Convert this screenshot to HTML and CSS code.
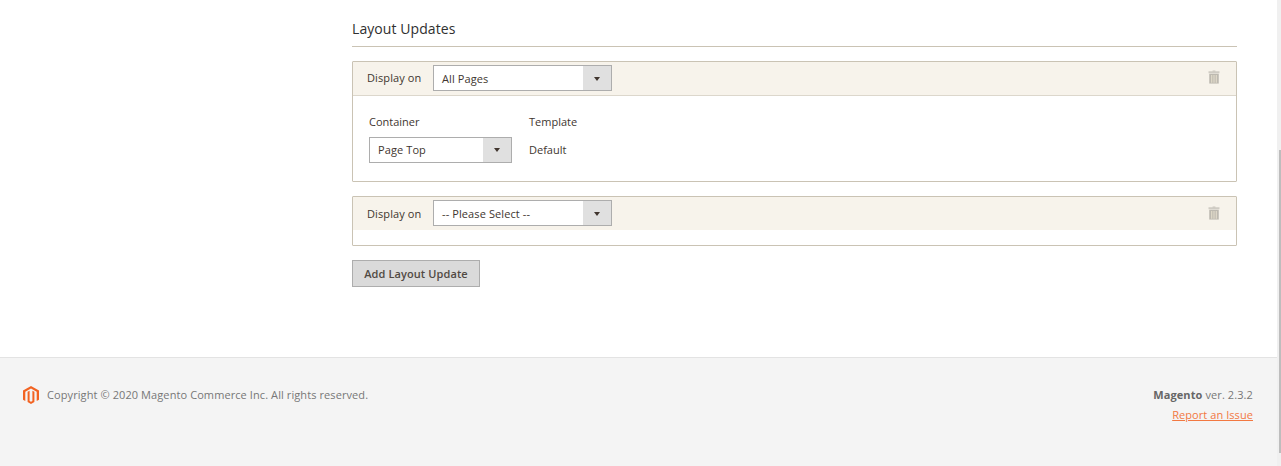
FILE: index.html
```html
<!DOCTYPE html>
<html lang="en">
<head>
<meta charset="utf-8">
<title>Layout Updates</title>
<link rel="stylesheet" href="styles.css">
</head>
<body>
<div class="page">
  <div class="content">
    <main class="main">
      <h2 class="title">Layout Updates</h2>
      <section class="card">
        <header class="card-head">
          <span class="display-label">Display on</span>
          <div class="select select-wide"><span class="select-text">All Pages</span><span class="select-btn"><i class="caret"></i></span></div>
          <svg class="trash" width="12" height="14" viewBox="0 0 12 14"><path d="M4.5 1V0h3v1H12v2H0V1z" fill="#cfcbc3"/><path d="M1 3.6h10V14H1z" fill="#bdb9b0"/><path d="M3 5h1.2v8H3zM5.4 5h1.2v8H5.4zM7.8 5H9v8H7.8z" fill="#e3dccb"/></svg>
        </header>
        <div class="card-body">
          <div class="col col-container">
            <span class="col-label">Container</span>
            <div class="select select-narrow"><span class="select-text">Page Top</span><span class="select-btn"><i class="caret"></i></span></div>
          </div>
          <div class="col">
            <span class="col-label">Template</span>
            <span class="col-value">Default</span>
          </div>
        </div>
      </section>
      <section class="card card-empty">
        <header class="card-head">
          <span class="display-label">Display on</span>
          <div class="select select-wide"><span class="select-text">-- Please Select --</span><span class="select-btn"><i class="caret"></i></span></div>
          <svg class="trash" width="12" height="14" viewBox="0 0 12 14"><path d="M4.5 1V0h3v1H12v2H0V1z" fill="#cfcbc3"/><path d="M1 3.6h10V14H1z" fill="#bdb9b0"/><path d="M3 5h1.2v8H3zM5.4 5h1.2v8H5.4zM7.8 5H9v8H7.8z" fill="#e3dccb"/></svg>
        </header>
      </section>
      <button class="add-btn" type="button">Add Layout Update</button>
    </main>
    <footer class="footer">
      <div class="copyright">
        <svg class="logo" width="16" height="18" viewBox="0 0 16 18"><path d="M8 0 0 4.5v9.2L2.3 15V5.8L8 2.6l5.7 3.2V15l2.3-1.3V4.5z" fill="#f26322"/><path d="M8 18l-3.4-2V5.8L6.6 4.7v10.2L8 15.7l1.4-.8V4.7l2 1.1V16z" fill="#f26322"/></svg>
        <span>Copyright © 2020 Magento Commerce Inc. All rights reserved.</span>
      </div>
      <div class="legal">
        <div class="version"><strong>Magento</strong> ver. 2.3.2</div>
        <a class="report" href="#">Report an Issue</a>
      </div>
    </footer>
  </div>
  <div class="scrollbar"><div class="thumb"></div></div>
</div>
</body>
</html>
```

FILE: styles.css
```css
* { box-sizing: border-box; }
html, body { margin: 0; height: 100%; overflow: hidden; }
body { font-family: "Open Sans", "DejaVu Sans", sans-serif; font-size: 11px; color: #41362f; background: #fff; }
.page { display: flex; height: 466px; }
.content { flex: 1; min-width: 0; display: flex; flex-direction: column; }
.main { flex: 1; padding: 19px 40px 0 352px; }
.title { margin: 0 0 14px; padding-bottom: 8px; height: 28px; border-bottom: 1px solid #cac3b4; font-size: 14px; line-height: 20px; font-weight: 500; letter-spacing: .08px; color: #303030; }
.card { height: 121px; border: 1px solid #cac3b4; border-radius: 1px; margin-bottom: 14px; }
.card-empty { height: 50px; margin-bottom: 14px; }
.card-head { display: flex; align-items: center; height: 34px; padding: 0 16px 2px 14px; background: #f7f3eb; border-bottom: 1px solid #dcd7cc; }
.card-empty .card-head { border-bottom: 0; padding-bottom: 1px; height: 33px; }
.display-label { width: 66px; font-size: 11px; letter-spacing: .1px; color: #41362f; }
.select { display: flex; height: 26px; background: #fff; border: 1px solid #adadad; }
.select-wide { width: 179px; }
.select-wide .select-text { line-height: 26px; }
.select-wide .caret { margin-top: 2px; }
.select-narrow { width: 143px; }
.select-text { flex: 1; padding-left: 8px; line-height: 24px; font-size: 11px; letter-spacing: .1px; color: #41362f; }
.select-btn { width: 28px; display: flex; align-items: center; justify-content: center; background: #e0e0e0; }
.caret { width: 0; height: 0; border-left: 3.5px solid transparent; border-right: 3.5px solid transparent; border-top: 4px solid #41362f; }
.trash { margin-left: auto; margin-top: -1px; transform: scale(.95); }
.card-body { display: flex; padding: 19px 16px 0; }
.col { display: flex; flex-direction: column; }
.col-container { width: 160px; }
.col-label { height: 22px; line-height: 14px; font-size: 11px; color: #41362f; }
.col-value { line-height: 26px; font-size: 11px; color: #41362f; }
.add-btn { display: block; width: 128px; height: 27px; padding: 0; background: #dadada; border: 1px solid #adadad; font: 600 11px "Open Sans", sans-serif; letter-spacing: .1px; color: #514943; }
.footer { height: 109px; display: flex; justify-content: space-between; padding: 28px 24px 0 23px; background: #f4f4f4; border-top: 1px solid #e3e3e3; }
.copyright { display: flex; align-items: flex-start; gap: 8px; font-size: 11px; line-height: 18px; letter-spacing: .09px; color: #777; }
.logo { flex: none; }
.legal { text-align: right; font-size: 11px; color: #777; }
.version { line-height: 18px; letter-spacing: .1px; }
.version strong { color: #666; font-weight: 700; }
.report { display: block; margin-top: 2px; line-height: 18px; letter-spacing: .07px; color: #f26322; opacity: .85; }
.scrollbar { width: 4px; background: #f0f0f0; display: flex; justify-content: flex-end; }
.thumb { width: 2px; height: 303px; margin-top: 150px; background: #bdbdbd; }
```
